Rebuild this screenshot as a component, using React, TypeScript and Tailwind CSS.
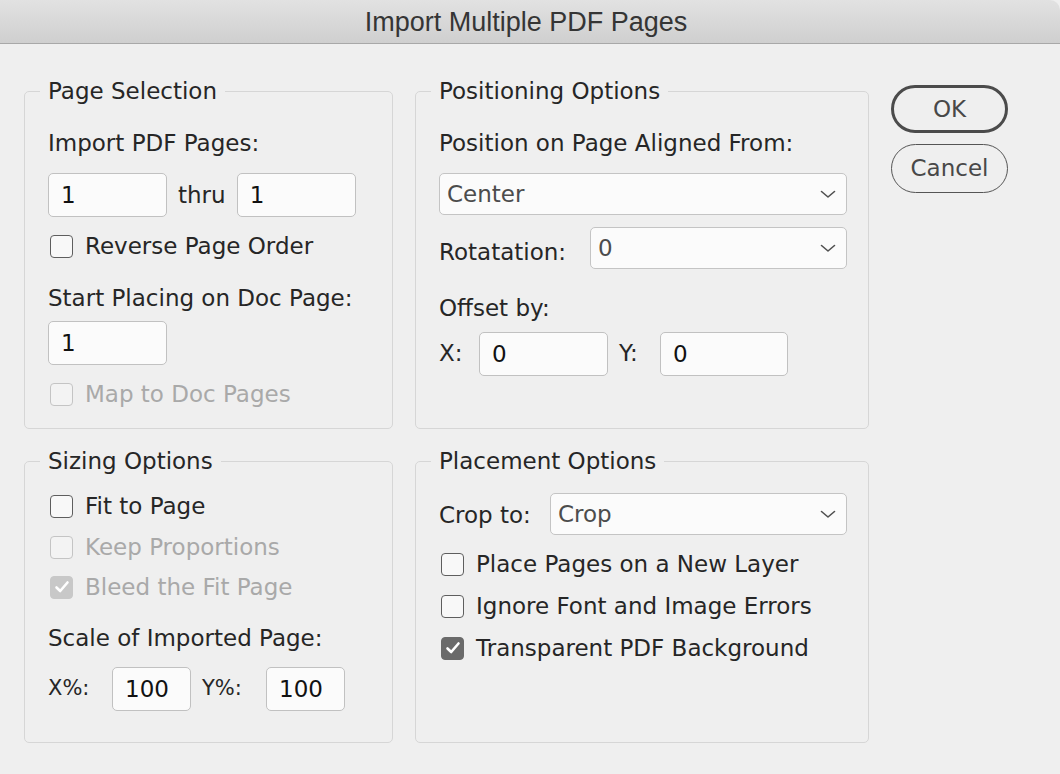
import React from 'react';

function Check({ label, checked = false, disabled = false }: { label: string; checked?: boolean; disabled?: boolean }) {
  let box = 'bg-[#f8f8f8] border-[#5e5e5e]';
  if (checked && disabled) box = 'bg-[#c8c8c8] border-[#c8c8c8]';
  else if (checked) box = 'bg-[#6a6a6a] border-[#6a6a6a]';
  else if (disabled) box = 'bg-[#f3f3f3] border-[#c4c4c4]';

  return (
    <label className={`flex items-center h-[28px] gap-[12px] ${disabled ? 'text-[#a9a9a9]' : 'text-[#262626]'}`}>
      <span className={`ml-[2px] w-[23px] h-[23px] rounded-[4px] border-[1.5px] flex items-center justify-center ${box}`}>
        {checked && (
          <svg width="16" height="14" viewBox="0 0 16 14" fill="none">
            <path d="M2.5 7.5 L6.2 11 L13.5 2.5" stroke="white" strokeWidth="2.6" strokeLinecap="round" strokeLinejoin="round" />
          </svg>
        )}
      </span>
      {label}
    </label>
  );
}

function Field({ value, className }: { value: string; className: string }) {
  return (
    <input
      readOnly
      value={value}
      className={`h-[44px] shrink-0 rounded-[5px] border-[1.5px] border-[#c1c1c1] bg-[#fbfbfb] pl-[12px] text-[#111] outline-none ${className}`}
    />
  );
}

function Select({ value, className }: { value: string; className: string }) {
  return (
    <div className={`h-[42px] rounded-[5px] border-[1.5px] border-[#c4c4c4] bg-[#fbfbfb] flex items-center justify-between pl-[7px] pr-[10px] text-[#4c4c4c] ${className}`}>
      <span>{value}</span>
      <svg width="16" height="9" viewBox="0 0 16 9" fill="none">
        <path d="M1.5 1.5 L8 7 L14.5 1.5" stroke="#505050" strokeWidth="1.6" strokeLinecap="round" strokeLinejoin="round" />
      </svg>
    </div>
  );
}

function Group({ title, className, children }: { title: string; className: string; children: React.ReactNode }) {
  return (
    <fieldset className={`min-w-0 border border-[#d6d6d6] rounded-[5px] pl-[23px] flex flex-col ${className}`}>
      <legend className="-ml-[8px] px-[8px] leading-[28px] text-[#262626]">{title}</legend>
      {children}
    </fieldset>
  );
}

export default function App() {
  return (
    <div className="w-[1060px] h-[774px] overflow-hidden bg-[#efefef] flex flex-col font-['DejaVu_Sans',sans-serif] text-[23px] text-[#262626]">
      <div className="h-[44px] shrink-0 flex items-center justify-center bg-linear-to-b from-[#e2e2e2] to-[#cfcfcf] border-b border-[#a8a8a8] rounded-tr-[10px] font-['Liberation_Sans',sans-serif] text-[27px] text-[#353535]">
        <span className="-ml-[8px] mt-[2px]">Import Multiple PDF Pages</span>
      </div>

      <div className="flex gap-[22px] pl-[24px] pt-[33px]">
        {/* left column */}
        <div className="w-[369px] flex flex-col gap-[18px]">
          <Group title="Page Selection" className="h-[352px] pt-[24px] pr-[23px]">
            <div className="h-[28px] leading-[28px]">Import PDF Pages:</div>
            <div className="mt-[16px] flex items-center">
              <Field value="1" className="w-[119px]" />
              <span className="mx-[11px]">thru</span>
              <Field value="1" className="w-[119px]" />
            </div>
            <div className="mt-[15px]">
              <Check label="Reverse Page Order" />
            </div>
            <div className="mt-[24px] h-[28px] leading-[28px]">Start Placing on Doc Page:</div>
            <div className="mt-[9px] flex">
              <Field value="1" className="w-[119px]" />
            </div>
            <div className="mt-[15px]">
              <Check label="Map to Doc Pages" disabled />
            </div>
          </Group>

          <Group title="Sizing Options" className="h-[296px] pt-[17px] pr-[23px]">
            <Check label="Fit to Page" />
            <div className="mt-[13px]">
              <Check label="Keep Proportions" disabled />
            </div>
            <div className="mt-[12px]">
              <Check label="Bleed the Fit Page" checked disabled />
            </div>
            <div className="mt-[23px] h-[28px] leading-[28px]">Scale of Imported Page:</div>
            <div className="mt-[15px] flex items-center">
              <span className="w-[64px] text-[21px]">X%:</span>
              <Field value="100" className="w-[79px]" />
              <span className="ml-[11px] w-[64px] text-[21px]">Y%:</span>
              <Field value="100" className="w-[79px]" />
            </div>
          </Group>
        </div>

        {/* right column */}
        <div className="w-[454px] flex flex-col gap-[18px]">
          <Group title="Positioning Options" className="h-[352px] pt-[24px] pr-[21px]">
            <div className="h-[28px] leading-[28px]">Position on Page Aligned From:</div>
            <Select value="Center" className="mt-[16px] w-full" />
            <div className="mt-[12px] flex items-center">
              <span className="w-[151px] shrink-0 mt-[8px]">Rotatation:</span>
              <Select value="0" className="flex-1" />
            </div>
            <div className="mt-[24px] h-[28px] leading-[28px]">Offset by:</div>
            <div className="mt-[10px] flex items-center">
              <span className="w-[40px]">X:</span>
              <Field value="0" className="w-[129px]" />
              <span className="ml-[11px] w-[41px]">Y:</span>
              <Field value="0" className="w-[128px]" />
            </div>
          </Group>

          <Group title="Placement Options" className="h-[296px] pt-[18px] pr-[21px]">
            <div className="flex items-center">
              <span className="w-[111px] shrink-0 mt-[3px]">Crop to:</span>
              <Select value="Crop" className="flex-1" />
            </div>
            <div className="mt-[15px]">
              <Check label="Place Pages on a New Layer" />
            </div>
            <div className="mt-[14px]">
              <Check label="Ignore Font and Image Errors" />
            </div>
            <div className="mt-[14px]">
              <Check label="Transparent PDF Background" checked />
            </div>
          </Group>
        </div>

        {/* buttons */}
        <div className="w-[117px] flex flex-col pt-[8px] gap-[11px]">
          <button className="h-[48px] rounded-full border-[3px] border-[#4b4b4b] text-[#484848]">OK</button>
          <button className="h-[49px] rounded-full border-[1.5px] border-[#555555] text-[#484848]">Cancel</button>
        </div>
      </div>
    </div>
  );
}
